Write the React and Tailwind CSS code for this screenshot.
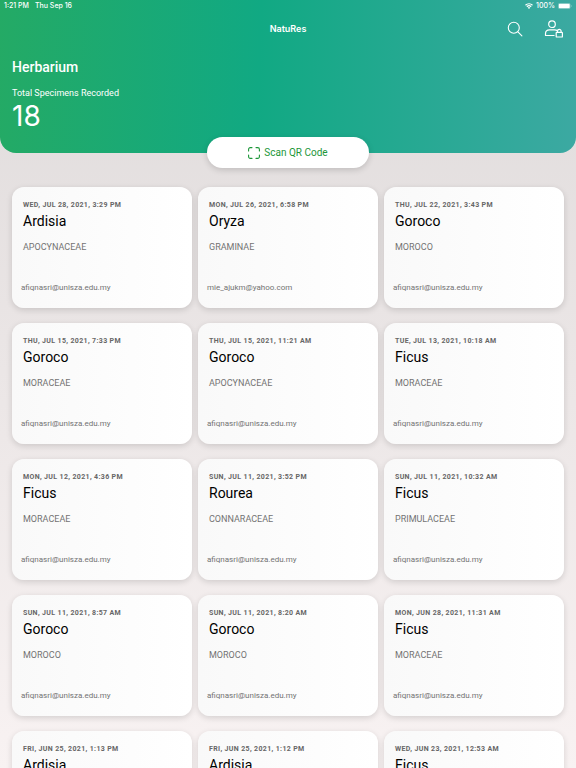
const specimens = [
    { date: 'Wed, Jul 28, 2021, 3:29 PM', name: 'Ardisia', family: 'Apocynaceae', email: 'afiqnasri@unisza.edu.my' },
    { date: 'Mon, Jul 26, 2021, 6:58 PM', name: 'Oryza', family: 'Graminae', email: 'mie_ajukm@yahoo.com' },
    { date: 'Thu, Jul 22, 2021, 3:43 PM', name: 'Goroco', family: 'Moroco', email: 'afiqnasri@unisza.edu.my' },
    { date: 'Thu, Jul 15, 2021, 7:33 PM', name: 'Goroco', family: 'Moraceae', email: 'afiqnasri@unisza.edu.my' },
    { date: 'Thu, Jul 15, 2021, 11:21 AM', name: 'Goroco', family: 'Apocynaceae', email: 'afiqnasri@unisza.edu.my' },
    { date: 'Tue, Jul 13, 2021, 10:18 AM', name: 'Ficus', family: 'Moraceae', email: 'afiqnasri@unisza.edu.my' },
    { date: 'Mon, Jul 12, 2021, 4:36 PM', name: 'Ficus', family: 'Moraceae', email: 'afiqnasri@unisza.edu.my' },
    { date: 'Sun, Jul 11, 2021, 3:52 PM', name: 'Rourea', family: 'Connaraceae', email: 'afiqnasri@unisza.edu.my' },
    { date: 'Sun, Jul 11, 2021, 10:32 AM', name: 'Ficus', family: 'Primulaceae', email: 'afiqnasri@unisza.edu.my' },
    { date: 'Sun, Jul 11, 2021, 8:57 AM', name: 'Goroco', family: 'Moroco', email: 'afiqnasri@unisza.edu.my' },
    { date: 'Sun, Jul 11, 2021, 8:20 AM', name: 'Goroco', family: 'Moroco', email: 'afiqnasri@unisza.edu.my' },
    { date: 'Mon, Jun 28, 2021, 11:31 AM', name: 'Ficus', family: 'Moraceae', email: 'afiqnasri@unisza.edu.my' },
    { date: 'Fri, Jun 25, 2021, 1:13 PM', name: 'Ardisia' },
    { date: 'Fri, Jun 25, 2021, 1:12 PM', name: 'Ardisia' },
    { date: 'Wed, Jun 23, 2021, 12:53 AM', name: 'Ficus' },
]

const StatusBar = () => (
    <div className="flex h-3 items-center justify-between pl-1 pr-1 font-['Inter',sans-serif] text-[7px] leading-3 font-medium">
        <div className="flex gap-[6px]">
            <span>1:21 PM</span>
            <span>Thu Sep 16</span>
        </div>
        <div className="flex items-center gap-[3px]">
            <svg className="h-[6px] w-2" viewBox="0 0 16 12" fill="none" stroke="currentColor" strokeWidth="2.6">
                <path d="M1 4.5a10 10 0 0 1 14 0" />
                <path d="M3.8 7.4a6 6 0 0 1 8.4 0" />
                <path d="M8 12 5.6 9.4a3.4 3.4 0 0 1 4.8 0z" fill="currentColor" stroke="none" />
            </svg>
            <span>100%</span>
            <svg className="h-[6px] w-[14px]" viewBox="0 0 28 12">
                <rect x="0.5" y="0.5" width="24" height="11" rx="3" fill="none" stroke="currentColor" strokeOpacity="0.5" />
                <rect x="1.5" y="1.5" width="22" height="9" rx="2" fill="currentColor" />
                <path d="M26 4v4c1.4-.5 1.4-3.500 0-4z" fill="currentColor" fillOpacity="0.6" />
            </svg>
        </div>
    </div>
)

const SpecimenCard = ({ specimen }) => (
    <article className="flex h-[121px] flex-col rounded-xl bg-linear-to-r from-[#f9f9f9] to-white pl-[11px] pt-[13px] shadow-[0_2px_6px_rgba(0,0,0,0.14)]">
        <p className="text-[7px] leading-[10px] font-bold tracking-wider text-[#666666] uppercase">{specimen.date}</p>
        <h2 className="mt-[3px] text-[14px] leading-4 text-black">{specimen.name}</h2>
        <p className="mt-[13px] text-[9px] leading-[10px] text-[#737373] uppercase">{specimen.family}</p>
        <p className="mt-auto mb-[15px] -ml-[2px] text-[8px] leading-[10px] text-[#737373]">{specimen.email}</p>
    </article>
)

export default function App() {
    return (
        <div className="h-screen overflow-hidden bg-linear-to-b from-[#dfdbdb] to-[#f8f2f2] font-['Roboto',sans-serif]">
            <header className="rounded-b-2xl bg-linear-[92deg] from-[#24aa65] from-0% via-[#11a983] via-45% to-[#3ca9a2] to-100% pb-[22px] text-white">
                <StatusBar />
                <div className="grid h-[34px] grid-cols-3 items-center px-3">
                    <h1 className="col-start-2 text-center font-['Inter',sans-serif] text-[9px] leading-3 font-semibold">NatuRes</h1>
                    <div className="flex items-center justify-end gap-[21px]">
                        <button type="button" aria-label="Search">
                            <svg className="block size-4" viewBox="0 0 16 16" fill="none" stroke="currentColor" strokeWidth="1.100" strokeLinecap="round">
                                <circle cx="6.800" cy="6.800" r="5.500" />
                                <path d="m10.900 10.900 4 4" />
                            </svg>
                        </button>
                        <button type="button" aria-label="Account">
                            <svg className="block h-[18px] w-5" viewBox="0 0 20 18" fill="none" stroke="currentColor" strokeWidth="1.200" strokeLinejoin="round">
                                <circle cx="8" cy="4.200" r="3.300" />
                                <path d="M10.500 15.500h-9v-1.800c0-2.400 1.600-3.900 4-3.900h5c1.300 0 2.300.4 3 1.100" />
                                <rect x="12.200" y="12.300" width="6.200" height="4.700" rx="0.600" />
                                <path d="M13.500 12.300v-1.100a1.800 1.800 0 0 1 3.600 0v1.100" />
                            </svg>
                        </button>
                    </div>
                </div>
                <div className="px-3 pt-3">
                    <h2 className="text-[14px] leading-[18px] font-medium">Herbarium</h2>
                    <p className="mt-[11px] text-[9px] leading-3">Total Specimens Recorded</p>
                    <p className="mt-[2px] font-['Inter',sans-serif] text-[28px] leading-[30px]">18</p>
                </div>
            </header>
            <div className="-mt-4 flex justify-center">
                <button type="button" className="flex h-[31px] w-[162px] items-center justify-center gap-1 rounded-full bg-white text-[10px] leading-3 text-[#1c9638] shadow-[0_2px_6px_rgba(0,0,0,0.16)]">
                    <svg className="size-3" viewBox="0 0 12 12" fill="none" stroke="currentColor" strokeWidth="1.100" strokeLinecap="round">
                        <path d="M.6 4V2.200A1.600 1.600 0 0 1 2.200.6H4M8 .6h1.800a1.600 1.600 0 0 1 1.600 1.600V4M11.400 8v1.800a1.600 1.600 0 0 1-1.600 1.600H8M4 11.400H2.200A1.600 1.600 0 0 1 .6 9.800V8" />
                    </svg>
                    Scan QR Code
                </button>
            </div>
            <main className="mt-[19px] grid grid-cols-3 gap-x-[6px] gap-y-[15px] px-3">
                {specimens.map((specimen) => (
                    <SpecimenCard key={specimen.date} specimen={specimen} />
                ))}
            </main>
        </div>
    )
}
